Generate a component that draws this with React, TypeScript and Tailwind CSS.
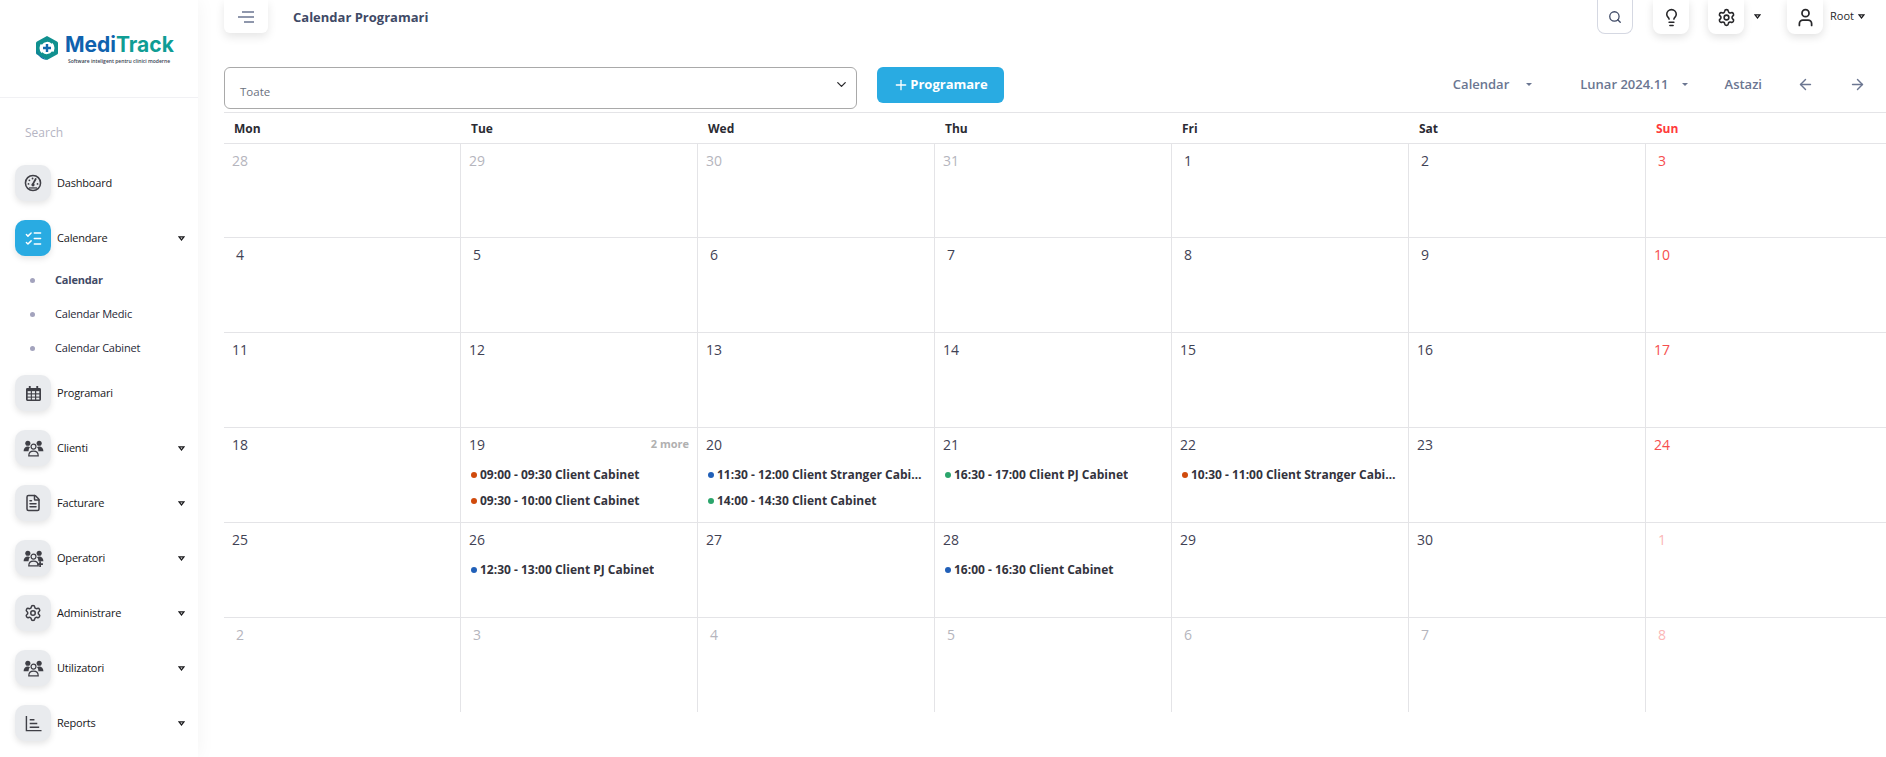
import React from "react";
import {
  ArrowLeft,
  ArrowRight,
  ChevronDown,
  FileText,
  Lightbulb,
  ListChecks,
  Plus,
  Search,
  Settings,
  User,
} from "lucide-react";

const GaugeIcon = () => (
  <svg viewBox="0 0 20 20" className="w-[18px] h-[18px]" fill="none" stroke="#3f3f46">
    <circle cx="10" cy="10" r="8.400" strokeWidth="1.700" />
    <path d="M10 11 L13 5.500" strokeWidth="2" strokeLinecap="round" />
    <circle cx="10" cy="12" r="1.800" fill="#3f3f46" stroke="none" />
    <circle cx="5" cy="11" r="1" fill="#3f3f46" stroke="none" />
    <circle cx="6" cy="7" r="1" fill="#3f3f46" stroke="none" />
    <circle cx="9.500" cy="5" r="1" fill="#3f3f46" stroke="none" />
    <circle cx="15" cy="11" r="1" fill="#3f3f46" stroke="none" />
    <path d="M5.500 15.500h9" strokeWidth="1.400" />
  </svg>
);

const CalendarIcon = () => (
  <svg viewBox="0 0 16 16" className="w-[15px] h-[15px]" fill="#3f3f46">
    <path d="M3 0h2v2h6V0h2v2h1.500A1.500 1.500 0 0 1 16 3.500V14.500A1.500 1.500 0 0 1 14.500 16h-13A1.500 1.500 0 0 1 0 14.500V3.500A1.500 1.500 0 0 1 1.500 2H3z" />
    <g fill="#e9ebee">
      <rect x="1.800" y="5.500" width="3.300" height="2.300" />
      <rect x="6.300" y="5.500" width="3.300" height="2.300" />
      <rect x="10.900" y="5.500" width="3.300" height="2.300" />
      <rect x="1.800" y="9" width="3.300" height="2.300" />
      <rect x="6.300" y="9" width="3.300" height="2.300" />
      <rect x="10.900" y="9" width="3.300" height="2.300" />
      <rect x="1.800" y="12.400" width="3.300" height="2" />
      <rect x="6.300" y="12.400" width="3.300" height="2" />
      <rect x="10.900" y="12.400" width="3.300" height="2" />
    </g>
  </svg>
);

const GroupIcon = ({ plus }: { plus?: boolean }) => (
  <svg viewBox="0 0 22 18" className="w-[21px] h-[17px]" fill="#3f3f46">
    <circle cx="5" cy="3.500" r="2.700" />
    <circle cx="17" cy="3.500" r="2.700" />
    <path d="M0.500 12c0-3 2-5 4.500-5 1 0 1.800.3 2.300.7C6.300 8.800 5.800 10.300 5.800 12z" />
    <path d="M21.500 12c0-3-2-5-4.500-5-1 0-1.800.3-2.300.7 1 1.100 1.500 2.600 1.500 4.300z" />
    <circle cx="11" cy="7" r="2.600" fill="none" stroke="#3f3f46" strokeWidth="1.300" />
    <path d="M6 16.800c0-3.300 2-5 5-5s5 1.700 5 5z" fill="none" stroke="#3f3f46" strokeWidth="1.300" />
    {plus && (
      <path d="M18 12v6M15 15h6" stroke="#3f3f46" strokeWidth="1.800" fill="none" />
    )}
  </svg>
);

const ReportsIcon = () => (
  <svg viewBox="0 0 18 18" className="w-[17px] h-[17px]" fill="none" stroke="#3f3f46" strokeWidth="1.500">
    <path d="M1.500 1v15.500H17.500" />
    <path d="M5 5h5M5 9h8M5 13h10" />
  </svg>
);

const LogoMark = () => (
  <svg viewBox="0 0 24 26" className="w-[24px] h-[26px] mt-[1px]">
    <path
      d="M12 1 L22 6.500 Q23 7 23 8 V18 Q23 19 22 19.500 L12 25 L2 19.500 Q1 19 1 18 V8 Q1 7 2 6.500 Z"
      fill="#10908f"
    />
    <path d="M1 15 C2 21 8 25 12 25 L4 20 Z" fill="#0f6fa8" />
    <circle cx="12" cy="13" r="7.500" fill="white" />
    <path d="M6 9 A7.500 7.500 0 0 1 17.500 8" stroke="#10908f" strokeWidth="2.200" fill="none" />
    <path d="M18 17 A7.500 7.500 0 0 1 6.500 18" stroke="#10908f" strokeWidth="2.200" fill="none" />
    <path d="M10.800 9h2.400v2.800H16v2.400h-2.800V17h-2.400v-2.800H8v-2.400h2.800z" fill="#1268ad" />
  </svg>
);

const Caret = ({ className = "" }: { className?: string }) => (
  <svg viewBox="0 0 8 6" className={`w-[7px] h-[5px] ${className}`} fill="none" stroke="#18181b" strokeWidth="1.500">
    <path d="M1 1h6L4 4.800z" />
  </svg>
);

const MiniCaret = () => (
  <svg viewBox="0 0 6 3" className="w-[6px] h-[3px]" fill="#6b7691">
    <path d="M0 0h6L3 3z" />
  </svg>
);

const NavItem = ({
  icon,
  label,
  active,
  caret,
}: {
  icon: React.ReactNode;
  label: string;
  active?: boolean;
  caret?: boolean;
}) => (
  <div className="flex items-center h-[36px] mb-[19px]">
    <div
      className={`w-[36px] h-[36px] rounded-[10px] flex items-center justify-center shadow-[0_3px_6px_rgba(0,0,0,0.1)] ${
        active ? "bg-[#29abe2]" : "bg-[#e9ebee]"
      }`}
    >
      {icon}
    </div>
    <span className="ml-[6px] text-[11px] tracking-[-0.2px] text-[#18181b]">{label}</span>
    {caret && <Caret className="ml-auto mr-[-2px]" />}
  </div>
);

const SubItem = ({ label, bold }: { label: string; bold?: boolean }) => (
  <div className="flex items-center h-[34px]">
    <span className="ml-[15px] w-[5px] h-[5px] rounded-full bg-[#a3a3bd]" />
    <span
      className={`ml-[20px] text-[11px] tracking-[-0.2px] ${
        bold ? "font-bold text-[#3f4a66]" : "text-[#1f2937]"
      }`}
    >
      {label}
    </span>
  </div>
);

const Sidebar = () => (
  <aside className="w-[198px] shrink-0 h-full bg-white shadow-[0_0_18px_rgba(0,0,0,0.05)]">
    <div className="h-[98px] flex pt-[34px] pl-[35px] border-b border-[#f1f1f4]">
      <LogoMark />
      <div className="ml-[6px] flex flex-col">
        <div className="text-[21px] leading-[22px] font-bold font-['Inter',sans-serif]">
          <span className="text-[#0f62ae]">Medi</span>
          <span className="text-[#0f9d94]">Track</span>
        </div>
        <div className="text-[5px] leading-[8px] mt-[1px] ml-[3px] font-semibold text-[#374151] whitespace-nowrap">
          Software inteligent pentru clinici moderne
        </div>
      </div>
    </div>
    <div className="pl-[25px] pt-[27px] h-[67px] text-[12px] leading-[16px] text-[#b5b5c3]">Search</div>
    <div className="pl-[15px] pr-[15px]">
      <NavItem icon={<GaugeIcon />} label="Dashboard" />
      <div className="mb-[-12px]">
        <NavItem
          icon={<ListChecks size={19} color="white" strokeWidth={1.800} />}
          label="Calendare"
          active
          caret
        />
      </div>
      <div className="mb-[10px]">
        <SubItem label="Calendar" bold />
        <SubItem label="Calendar Medic" />
        <SubItem label="Calendar Cabinet" />
      </div>
      <NavItem icon={<CalendarIcon />} label="Programari" />
      <NavItem icon={<GroupIcon />} label="Clienti" caret />
      <NavItem icon={<FileText size={18} color="#3f3f46" />} label="Facturare" caret />
      <NavItem icon={<GroupIcon plus />} label="Operatori" caret />
      <NavItem icon={<Settings size={18} color="#3f3f46" />} label="Administrare" caret />
      <NavItem icon={<GroupIcon />} label="Utilizatori" caret />
      <NavItem icon={<ReportsIcon />} label="Reports" caret />
    </div>
  </aside>
);

const TopIcon = ({ children, outlined }: { children: React.ReactNode; outlined?: boolean }) => (
  <div
    className={`w-[36px] h-[34px] rounded-b-[8px] bg-white flex items-center justify-center ${
      outlined
        ? "border border-t-0 border-[#d5d8e2]"
        : "shadow-[0_3px_8px_rgba(0,0,0,0.12)]"
    }`}
  >
    {children}
  </div>
);

const TopBar = () => (
  <div className="h-[67px] flex items-start">
    <div className="w-[44px] h-[33px] rounded-b-[6px] bg-white shadow-[0_4px_10px_rgba(0,0,0,0.1)] flex items-center justify-center">
      <svg viewBox="0 0 18 12" className="w-[18px] h-[12px]" stroke="#6b7691" strokeWidth="1.500">
        <path d="M5 1h12M1 6h16M7 11h10" />
      </svg>
    </div>
    <h1 className="ml-[25px] mt-[8px] text-[13px] leading-[18px] font-bold text-[#3f4a66]">
      Calendar Programari
    </h1>
    <div className="ml-auto flex items-start">
      <TopIcon outlined>
        <Search size={14} color="#3f4a66" strokeWidth={2.200} />
      </TopIcon>
      <div className="ml-[20px]">
        <TopIcon>
          <Lightbulb size={19} color="#27272a" />
        </TopIcon>
      </div>
      <div className="ml-[19px]">
        <TopIcon>
          <Settings size={19} color="#27272a" />
        </TopIcon>
      </div>
      <Caret className="ml-[10px] mt-[14px] mr-[26px]" />
      <TopIcon>
        <User size={21} color="#27272a" />
      </TopIcon>
      <span className="ml-[7px] mt-[8px] text-[11px] leading-[16px] text-[#27272a]">Root</span>
      <Caret className="ml-[4px] mt-[14px] mr-[21px]" />
    </div>
  </div>
);

const Toolbar = () => (
  <div className="h-[46px] flex items-start border-b border-[#e4e4e7]">
    <div className="w-[633px] h-[42px] border border-[#a9a9a9] rounded-[6px] flex items-end justify-between pl-[15px] pr-[7px] pb-[8px]">
      <span className="text-[11.500px] leading-[16px] text-[#6b7280]">Toate</span>
      <ChevronDown size={15} color="#27272a" className="mb-[8px]" />
    </div>
    <div className="ml-[20px] w-[127px] h-[36px] rounded-[6px] bg-[#29abe2] flex items-center justify-center text-white text-[13px] font-bold">
      <Plus size={16} strokeWidth={2} className="mr-[1px]" />
      Programare
    </div>
    <div className="ml-auto mt-[8px] flex items-center text-[13px] leading-[18px] font-semibold text-[#6b7691] pr-[20px]">
      <span>Calendar</span>
      <span className="ml-[17px]"><MiniCaret /></span>
      <span className="ml-[48px]">Lunar 2024.11</span>
      <span className="ml-[13px]"><MiniCaret /></span>
      <span className="ml-[37px]">Astazi</span>
      <ArrowLeft size={17} className="ml-[35px]" />
      <ArrowRight size={17} className="ml-[35px]" />
    </div>
  </div>
);

type Ev = { text: string; color: string };

type Day = { n: number; muted?: boolean; more?: string; events?: Ev[] };

const BLUE = "#2160b8";
const GREEN = "#2ba56c";
const ORANGE = "#d04a0c";

const weeks: Day[][] = [
  [{ n: 28, muted: true }, { n: 29, muted: true }, { n: 30, muted: true }, { n: 31, muted: true }, { n: 1 }, { n: 2 }, { n: 3 }],
  [{ n: 4 }, { n: 5 }, { n: 6 }, { n: 7 }, { n: 8 }, { n: 9 }, { n: 10 }],
  [{ n: 11 }, { n: 12 }, { n: 13 }, { n: 14 }, { n: 15 }, { n: 16 }, { n: 17 }],
  [
    { n: 18 },
    {
      n: 19,
      more: "2 more",
      events: [
        { text: "09:00 - 09:30 Client Cabinet", color: ORANGE },
        { text: "09:30 - 10:00 Client Cabinet", color: ORANGE },
      ],
    },
    {
      n: 20,
      events: [
        { text: "11:30 - 12:00 Client Stranger Cabinet", color: BLUE },
        { text: "14:00 - 14:30 Client Cabinet", color: GREEN },
      ],
    },
    { n: 21, events: [{ text: "16:30 - 17:00 Client PJ Cabinet", color: GREEN }] },
    { n: 22, events: [{ text: "10:30 - 11:00 Client Stranger Cabinet", color: ORANGE }] },
    { n: 23 },
    { n: 24 },
  ],
  [
    { n: 25 },
    { n: 26, events: [{ text: "12:30 - 13:00 Client PJ Cabinet", color: BLUE }] },
    { n: 27 },
    { n: 28, events: [{ text: "16:00 - 16:30 Client Cabinet", color: BLUE }] },
    { n: 29 },
    { n: 30 },
    { n: 1, muted: true },
  ],
  [{ n: 2, muted: true }, { n: 3, muted: true }, { n: 4, muted: true }, { n: 5, muted: true }, { n: 6, muted: true }, { n: 7, muted: true }, { n: 8, muted: true }],
];

const dayNames = ["Mon", "Tue", "Wed", "Thu", "Fri", "Sat", "Sun"];

const Cell = ({ day, col, first }: { day: Day; col: number; first: boolean }) => {
  const sunday = col === 6;
  let color = "text-[#3f4254]";
  if (sunday) color = day.muted ? "text-[#fbb6b6]" : "text-[#f64e4e]";
  else if (day.muted) color = "text-[#b5b5bd]";

  return (
    <div
      className={`min-w-0 px-[10px] pt-[6px] ${first ? "h-[93px]" : "h-[94px]"} ${
        col > 0 ? "border-l border-[#e4e4e7]" : ""
      }`}
    >
      <div className="flex items-center justify-between h-[21px]">
        <span className={`w-[20px] ml-[-4px] text-center text-[14px] leading-[20px] ${color}`}>{day.n}</span>
        {day.more && (
          <span className="text-[11px] font-bold text-[#b0b0b0] mr-[-2px]">{day.more}</span>
        )}
      </div>
      <div className="mt-[7px] flex flex-col">
        {day.events?.map((ev) => (
          <div key={ev.text} className="flex items-center h-[26px] min-w-0">
            <span
              className="w-[6px] h-[6px] rounded-full shrink-0 mb-[1px]"
              style={{ backgroundColor: ev.color }}
            />
            <span className="ml-[3px] truncate text-[12px] font-bold text-[#33333d]">{ev.text}</span>
          </div>
        ))}
      </div>
    </div>
  );
};

const CalendarGrid = () => (
  <div>
    <div className="grid grid-cols-[236px_repeat(5,237px)_1fr] h-[30px] pt-[2px] items-center">
      {dayNames.map((d, i) => (
        <div
          key={d}
          className={`text-[12px] font-bold ${i === 0 ? "pl-[10px]" : "pl-[11px]"} ${
            i === 6 ? "text-[#ff3b3b]" : "text-[#2b2b33]"
          }`}
        >
          {d}
        </div>
      ))}
    </div>
    {weeks.map((week, i) => (
      <div
        key={i}
        className="grid grid-cols-[236px_repeat(5,237px)_1fr] border-t border-[#e4e4e7]"
      >
        {week.map((day, col) => (
          <Cell key={col} day={day} col={col} first={i === 0} />
        ))}
      </div>
    ))}
  </div>
);

export default function App() {
  return (
    <div className="flex h-[757px] w-full overflow-hidden bg-white font-['Open_Sans',sans-serif]">
      <Sidebar />
      <main className="flex-1 min-w-0 pl-[26px]">
        <TopBar />
        <Toolbar />
        <CalendarGrid />
      </main>
    </div>
  );
}
